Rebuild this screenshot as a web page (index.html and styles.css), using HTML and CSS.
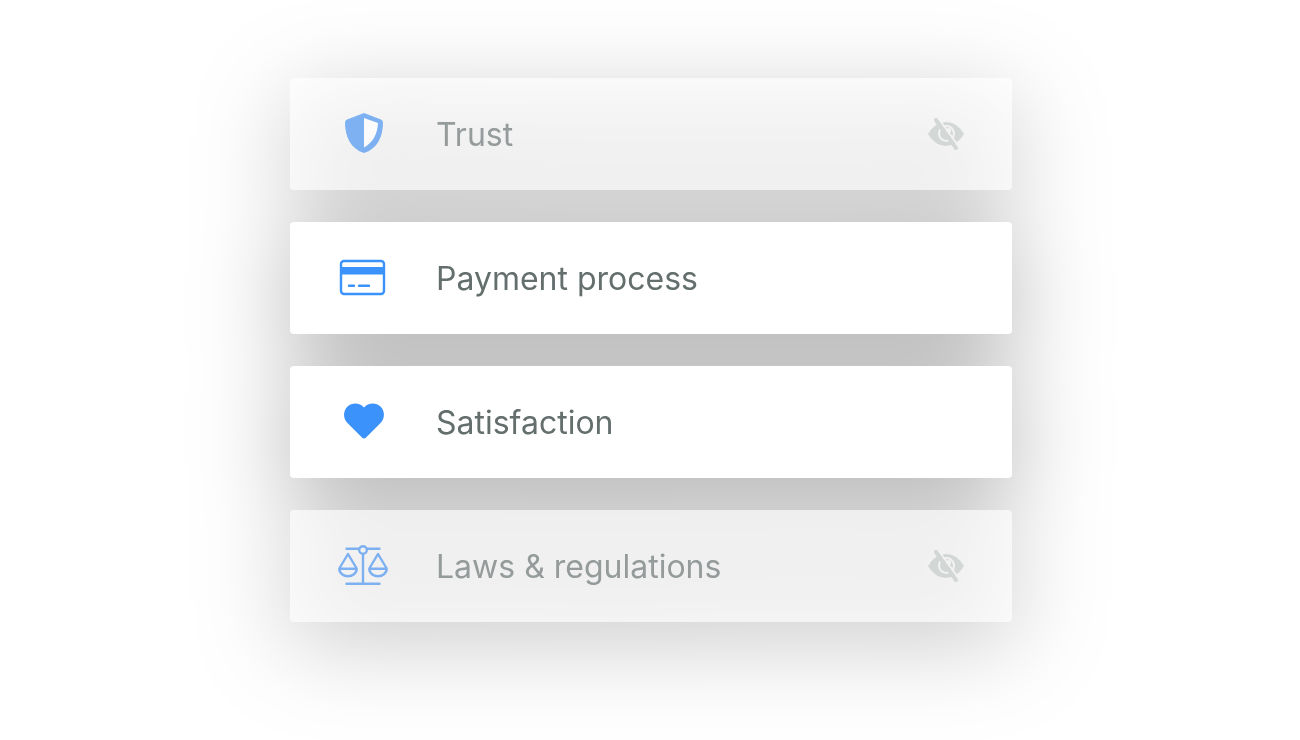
FILE: index.html
```html
<!DOCTYPE html>
<html lang="en">
<head>
  <meta charset="utf-8">
  <title>Topics</title>
  <link rel="stylesheet" href="styles.css">
</head>
<body>
  <ul class="topics">
    <li class="topic hidden">
      <svg class="icon" viewBox="0 1 50 50" aria-hidden="true">
        <path fill="currentColor" d="M26 5 L43 11.500 Q45 12.300 45 14.500 C45 29 39 41 26 45 C13 41 7 29 7 14.500 Q7 12.300 9 11.500 Z"/>
        <path fill="#fff" d="M26 10 L40 15 C39.500 26 35 34.500 26 39.500 Z"/>
      </svg>
      <span class="name">Trust</span>
      <button class="toggle" aria-label="Show Trust">
        <svg viewBox="0 0 36 32" aria-hidden="true">
          <path fill="currentColor" d="M0 16 Q7 4 18 4 T36 16 Q29 28 18 28 T0 16 Z"/>
          <circle cx="18.500" cy="15.500" r="7.500" fill="none" stroke="#f4f4f4" stroke-width="2"/>
          <circle cx="20.500" cy="12.500" r="2.500" fill="#f4f4f4"/>
          <path stroke="#f4f4f4" stroke-width="2" d="M11.500 2 L31 29"/>
          <path stroke="currentColor" stroke-width="4" stroke-linecap="round" d="M8 2 L28 30"/>
        </svg>
      </button>
    </li>
    <li class="topic">
      <svg class="icon" viewBox="0 1 50 50" aria-hidden="true">
        <rect x="3" y="9" width="43" height="33" rx="3" fill="none" stroke="currentColor" stroke-width="2.400"/>
        <path fill="currentColor" d="M2 15h45v7.500H2z"/>
        <path stroke="currentColor" stroke-width="2.400" stroke-linecap="round" d="M11 33.800h5M21 33.800h10"/>
      </svg>
      <span class="name">Payment process</span>
    </li>
    <li class="topic">
      <svg class="icon" viewBox="0 1 50 50" aria-hidden="true">
        <path fill="currentColor" d="M26 11.500 C22 6.500 14 6 9.500 10.500 C5 15 5 22 9 26.500 L24 41.500 Q26 43.500 28 41.500 L43 26.500 C47 22 47 15 42.500 10.500 C38 6 30 6.500 26 11.500 Z"/>
      </svg>
      <span class="name">Satisfaction</span>
    </li>
    <li class="topic hidden">
      <svg class="icon" viewBox="0 1 50 50" aria-hidden="true">
        <g fill="none" stroke="currentColor" stroke-width="2.400" stroke-linecap="round" stroke-linejoin="round">
          <circle cx="25" cy="10" r="3.800"/>
          <path d="M8.500 8.800H21M29 8.800H41.500M25 14V43.500M8.500 43.800H41.500"/>
          <path d="M10 14 L1.300 28.500 C1.300 38.800 18.700 38.800 18.700 28.500 Z M1.300 28.800H18.700"/>
          <path d="M40 14 L31.300 28.500 C31.300 38.800 48.700 38.800 48.700 28.500 Z M31.300 28.800H48.700"/>
        </g>
      </svg>
      <span class="name">Laws &amp; regulations</span>
      <button class="toggle" aria-label="Show Laws &amp; regulations">
        <svg viewBox="0 0 36 32" aria-hidden="true">
          <path fill="currentColor" d="M0 16 Q7 4 18 4 T36 16 Q29 28 18 28 T0 16 Z"/>
          <circle cx="18.500" cy="15.500" r="7.500" fill="none" stroke="#f4f4f4" stroke-width="2"/>
          <circle cx="20.500" cy="12.500" r="2.500" fill="#f4f4f4"/>
          <path stroke="#f4f4f4" stroke-width="2" d="M11.500 2 L31 29"/>
          <path stroke="currentColor" stroke-width="4" stroke-linecap="round" d="M8 2 L28 30"/>
        </svg>
      </button>
    </li>
  </ul>
</body>
</html>
```
FILE: styles.css
```css
body {
  box-sizing: border-box;
  min-height: 100vh;
  margin: 0;
  padding: 78px 24px 78px 26px;
  background: #fff;
  font-family: Inter, "Liberation Sans", sans-serif;
}

.topics {
  display: flex;
  flex-direction: column;
  gap: 32px;
  max-width: 722px;
  margin: 0 auto;
  padding: 0;
  list-style: none;
  filter: drop-shadow(0 20px 48px rgba(0, 0, 0, 0.31));
}

.topic {
  display: flex;
  align-items: center;
  box-sizing: border-box;
  min-height: 112px;
  padding: 24px 48px;
  border-radius: 4px;
  background: #fff;
}

.icon {
  flex: none;
  width: 50px;
  height: 50px;
  margin-right: 48px;
  color: #3b92fa;
}

.name {
  flex: 1;
  padding-top: 2px;
  color: #636e6d;
  font-size: 32px;
  line-height: 40px;
}

.toggle {
  display: flex;
  padding: 0;
  border: none;
  background: none;
  color: #c3c9c7;
  cursor: pointer;
}

.toggle svg {
  width: 36px;
  height: 32px;
}

/* switched-off topics let the shadow show through */
.hidden {
  background: rgba(255, 255, 255, 0.65);
}

.hidden > * {
  opacity: 0.65;
}

.hidden .icon {
  color: #3f8ff1;
}
```
